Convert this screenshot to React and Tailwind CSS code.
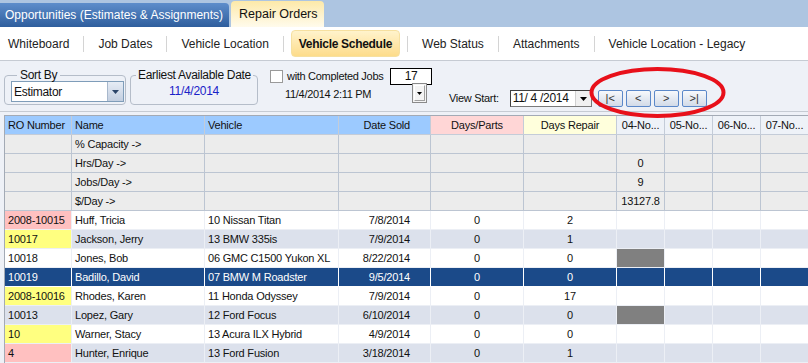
import React from 'react';

const cols = 'grid grid-cols-[67px_133px_134px_92px_93px_93px_48px_48px_48px_48px]';

const navItems = ['Whiteboard', 'Job Dates', 'Vehicle Location', 'Vehicle Schedule', 'Web Status', 'Attachments', 'Vehicle Location - Legacy'];

const summary = [
  { label: '% Capacity ->', value: '' },
  { label: 'Hrs/Day ->', value: '0' },
  { label: 'Jobs/Day ->', value: '9' },
  { label: '$/Day ->', value: '13127.8' },
];

const rows = [
  { ro: '2008-10015', roBg: 'bg-[#ffc0c0]', name: 'Huff, Tricia', vehicle: '10 Nissan Titan', sold: '7/8/2014', parts: '0', repair: '2' },
  { ro: '10017', roBg: 'bg-[#ffff80]', name: 'Jackson, Jerry', vehicle: '13 BMW 335is', sold: '7/9/2014', parts: '0', repair: '1', alt: true },
  { ro: '10018', name: 'Jones, Bob', vehicle: '06 GMC C1500 Yukon XL', sold: '8/22/2014', parts: '0', repair: '0', gray: true },
  { ro: '10019', name: 'Badillo, David', vehicle: '07 BMW M Roadster', sold: '9/5/2014', parts: '0', repair: '0', selected: true },
  { ro: '2008-10016', roBg: 'bg-[#ffff80]', name: 'Rhodes, Karen', vehicle: '11 Honda Odyssey', sold: '7/9/2014', parts: '0', repair: '17' },
  { ro: '10013', name: 'Lopez, Gary', vehicle: '12 Ford Focus', sold: '6/10/2014', parts: '0', repair: '0', alt: true, gray: true },
  { ro: '10', roBg: 'bg-[#ffff80]', name: 'Warner, Stacy', vehicle: '13 Acura ILX Hybrid', sold: '4/9/2014', parts: '0', repair: '0' },
  { ro: '4', roBg: 'bg-[#ffc0c0]', name: 'Hunter, Enrique', vehicle: '13 Ford Fusion', sold: '3/18/2014', parts: '0', repair: '1', alt: true },
];

const DownArrow = ({ className }) => (
  <svg width="7" height="4" viewBox="0 0 7 4" className={className}>
    <polygon points="0,0 7,0 3.5,4" fill="currentColor" />
  </svg>
);

const TopTabs = () => (
  <div className="h-[27px] bg-[#adc5e1] flex items-end whitespace-nowrap">
    <div className="h-[24px] w-[229px] rounded-tr-[4px] bg-linear-to-b from-[#5d8dcb] to-[#2f5e9d] text-white text-[12px] leading-[24px] pl-[5px]">
      Opportunities (Estimates &amp; Assignments)
    </div>
    <div className="ml-[2px] h-[26px] w-[93px] rounded-t-[4px] bg-linear-to-b from-[#fde9a8] to-[#fffbec] text-[#111] text-[12.5px] leading-[26px] pl-[8px]">
      Repair Orders
    </div>
  </div>
);

const NavRow = () => (
  <div className="h-[33px] bg-white flex items-center text-[12px] text-[#222] whitespace-nowrap">
    {navItems.map((item, i) => (
      <React.Fragment key={item}>
        {i > 0 && <span className="w-px h-[16px] bg-[#d4d4d4]" />}
        {item === 'Vehicle Schedule' ? (
          <span className="mx-[7px] px-[7px] h-[27px] leading-[27px] rounded-[4px] font-bold tracking-[-0.3px] text-[#111] bg-linear-to-b from-[#fff3cc] to-[#fddc8a] border border-[#f6e0a0]">
            {item}
          </span>
        ) : (
          <span className={i === 0 ? 'pl-[8px] pr-[14px]' : 'px-[14px]'}>{item}</span>
        )}
      </React.Fragment>
    ))}
  </div>
);

const Toolbar = () => (
  <div className="h-[52px] bg-[#eef1f7] border-t border-b border-[#c6cbd3] flex items-start text-[11px] text-[#111] tracking-[-0.3px] whitespace-nowrap">
    <fieldset className="ml-[4px] mt-[8px] w-[122px] border border-[#b5bdc9] rounded-[4px] pl-[6px] pb-[2px]">
      <legend className="ml-[6px] px-[3px] leading-[12px] text-[12px]">Sort By</legend>
      <div className="w-[113px] h-[21px] bg-white border border-[#7f9db9] flex items-center">
        <span className="pl-[2px] flex-1 text-[12px]">Estimator</span>
        <span className="w-[16px] h-[19px] bg-linear-to-b from-[#e6ecf5] to-[#c3cfe0] border-l border-[#a8b8cc] flex items-center justify-center text-[#2b4468]">
          <DownArrow />
        </span>
      </div>
    </fieldset>

    <fieldset className="ml-[4px] mt-[8px] w-[128px] border border-[#b5bdc9] rounded-[4px] pb-[6px]">
      <legend className="ml-[5px] px-[2px] leading-[12px] text-[12px]">Earliest Available Date</legend>
      <div className="pt-[4px] leading-[13px] text-center text-[12px] text-[#1a22c8]">11/4/2014</div>
    </fieldset>

    <div className="ml-[12px] mt-[7px] w-[162px]">
      <div className="h-[17px] flex items-center">
        <span className="w-[13px] h-[13px] bg-white border border-[#9a9a9a]" />
        <span className="ml-[4px] text-[11px]">with Completed Jobs</span>
        <span className="ml-auto w-[42px] h-[17px] bg-white border border-black text-center leading-[15px] text-[12px]">17</span>
      </div>
      <div className="-mt-[2px] flex items-start">
        <span className="ml-[15px] mt-[5px] leading-[13px] text-[11px]">11/4/2014 2:11 PM</span>
        <span className="ml-auto mr-[5px] w-[15px] h-[20px] border border-[#8a8a8a] bg-[#f4f4f4] flex items-center justify-center">
          <span className="w-[11px] h-[16px] border-t border-l border-white border-b border-r border-b-[#a0a0a0] border-r-[#a0a0a0] flex items-center justify-center text-black">
            <DownArrow className="w-[5px] h-[3px]" />
          </span>
        </span>
      </div>
    </div>

    <span className="ml-[17px] mt-[31px] leading-[13px] text-[11px]">View Start:</span>

    <div className="ml-[11px] mt-[29px] w-[82px] h-[17px] bg-white border border-[#7a7a7a] border-t-[#404040] border-l-[#404040] flex items-center">
      <span className="pl-[2px] flex-1 text-[12px] leading-[15px]">11/ 4 /2014</span>
      <span className="w-[16px] h-[15px] bg-[#f0f0f0] border-l border-[#d0d0d0] flex items-center justify-center text-black">
        <DownArrow />
      </span>
    </div>

    <div className="ml-[6px] mt-[29px] flex gap-[3px]">
      {['|<', '<', '>', '>|'].map((g) => (
        <button
          key={g}
          type="button"
          className="w-[25px] h-[17px] rounded-[2px] border border-[#5b88c9] bg-linear-to-b from-[#f7f9fc] to-[#d3dbe8] text-[11px] leading-[15px] text-[#333] tracking-normal"
        >
          {g}
        </button>
      ))}
    </div>
  </div>
);

const cell = 'h-[19px] leading-[18px] border-r border-b whitespace-nowrap overflow-hidden';

const Grid = () => (
  <div className="bg-[#eef1f7] pl-[4px] pt-[3px]">
    <div className="border-l border-t border-[#a3aab5] text-[11px] text-[#111] tracking-[-0.2px]">
      <div className={cols}>
        <div className={`${cell} border-[#c4ccd8] bg-[#9ccaff] pl-[3px]`}>RO Number</div>
        <div className={`${cell} border-[#c4ccd8] bg-[#9ccaff] pl-[3px]`}>Name</div>
        <div className={`${cell} border-[#c4ccd8] bg-[#9ccaff] pl-[3px]`}>Vehicle</div>
        <div className={`${cell} border-[#c4ccd8] bg-[#9ccaff] text-right pr-[20px]`}>Date Sold</div>
        <div className={`${cell} border-[#c4ccd8] bg-[#ffd6d6] text-center`}>Days/Parts</div>
        <div className={`${cell} border-[#c4ccd8] bg-[#ffffdc] text-center`}>Days Repair</div>
        {['04-No...', '05-No...', '06-No...', '07-No...'].map((d) => (
          <div key={d} className={`${cell} border-[#c4ccd8] bg-[#eef2f8] text-center`}>{d}</div>
        ))}
      </div>

      {summary.map((s) => (
        <div key={s.label} className={cols}>
          <div className={`${cell} border-[#bcc5d2] bg-[#ececec]`} />
          <div className={`${cell} border-[#bcc5d2] bg-[#ececec] pl-[3px]`}>{s.label}</div>
          <div className={`${cell} border-[#bcc5d2] bg-[#ececec]`} />
          <div className={`${cell} border-[#bcc5d2] bg-[#ececec]`} />
          <div className={`${cell} border-[#bcc5d2] bg-[#ececec]`} />
          <div className={`${cell} border-[#bcc5d2] bg-[#ececec]`} />
          <div className={`${cell} border-[#bcc5d2] bg-[#ececec] text-center`}>{s.value}</div>
          <div className={`${cell} border-[#bcc5d2] bg-[#ececec]`} />
          <div className={`${cell} border-[#bcc5d2] bg-[#ececec]`} />
          <div className={`${cell} border-[#bcc5d2] bg-[#ececec]`} />
        </div>
      ))}

      {rows.map((r) => {
        const rowBg = r.selected ? 'bg-[#1b4a89] text-white' : r.alt ? 'bg-[#dce1ec]' : 'bg-white';
        const line = r.selected ? 'border-white' : 'border-[#eceff5]';
        const c = `${cell} ${line}`;
        return (
          <div key={r.ro + r.name} className={`${cols} ${rowBg}`}>
            <div className={`${c} pl-[3px] ${!r.selected && r.roBg ? r.roBg : ''}`}>{r.ro}</div>
            <div className={`${c} pl-[3px]`}>{r.name}</div>
            <div className={`${c} pl-[3px]`}>{r.vehicle}</div>
            <div className={`${c} text-right pr-[20px]`}>{r.sold}</div>
            <div className={`${c} text-center`}>{r.parts}</div>
            <div className={`${c} text-center`}>{r.repair}</div>
            <div className={`${c} ${r.gray ? 'bg-[#808080]' : ''}`} />
            <div className={c} />
            <div className={c} />
            <div className={c} />
          </div>
        );
      })}
    </div>
  </div>
);

export default function App() {
  return (
    <div className="relative w-[808px] h-[363px] overflow-hidden bg-white font-['Liberation_Sans',Arial,sans-serif]">
      <TopTabs />
      <NavRow />
      <Toolbar />
      <Grid />
      <svg className="absolute left-[589px] top-[67px] z-10" width="137" height="51" viewBox="0 0 137 51">
        <ellipse cx="68.5" cy="25.5" rx="66" ry="23.5" fill="none" stroke="#e8101a" strokeWidth="4" />
      </svg>
    </div>
  );
}
